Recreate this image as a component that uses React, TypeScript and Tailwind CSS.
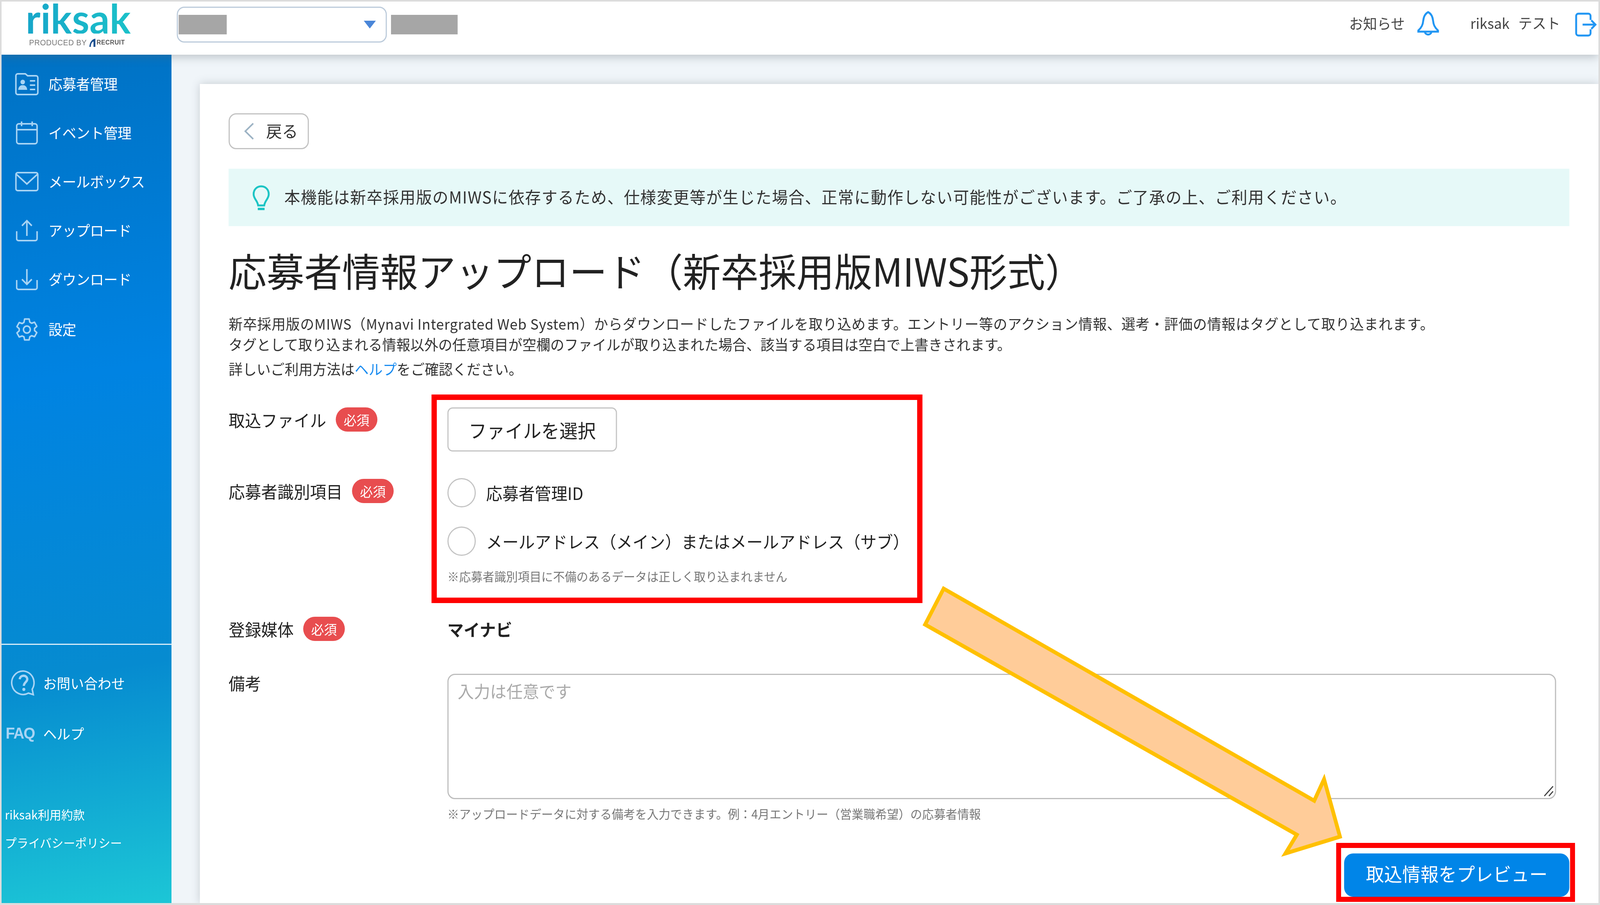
import React from "react";

const Stroke = "#a8d4f4";

function CardIcon() {
  return (
    <svg width="64" height="60" viewBox="0 0 64 60" fill="none" stroke={Stroke} strokeWidth="4">
      <path d="M3 9a5 5 0 0 1 5-5h20l6 5h22a5 5 0 0 1 5 5v38a5 5 0 0 1-5 5H8a5 5 0 0 1-5-5z" />
      <circle cx="21" cy="25" r="6" fill={Stroke} stroke="none" />
      <path d="M9 45c1-9 6-12 12-12s11 3 12 12z" fill={Stroke} stroke="none" />
      <path d="M40 22h14M40 33h14M40 44h14" strokeWidth="4" />
    </svg>
  );
}
function CalIcon() {
  return (
    <svg width="58" height="60" viewBox="0 0 58 60" fill="none" stroke={Stroke} strokeWidth="4">
      <rect x="2" y="7" width="54" height="51" rx="6" />
      <path d="M2 22h54M15 1v12M43 1v12" />
    </svg>
  );
}
function MailIcon() {
  return (
    <svg width="62" height="50" viewBox="0 0 62 50" fill="none" stroke={Stroke} strokeWidth="4">
      <rect x="2" y="2" width="58" height="46" rx="5" />
      <path d="M3 6l28 25 28-25" />
    </svg>
  );
}
function UpIcon() {
  return (
    <svg width="58" height="56" viewBox="0 0 58 56" fill="none" stroke={Stroke} strokeWidth="4">
      <path d="M2 30v19a5 5 0 0 0 5 5h44a5 5 0 0 0 5-5V30" />
      <path d="M29 42V3M16 16L29 3l13 13" />
    </svg>
  );
}
function DownIcon() {
  return (
    <svg width="58" height="56" viewBox="0 0 58 56" fill="none" stroke={Stroke} strokeWidth="4">
      <path d="M2 30v19a5 5 0 0 0 5 5h44a5 5 0 0 0 5-5V30" />
      <path d="M29 2v39M16 28l13 13 13-13" />
    </svg>
  );
}
function GearIcon() {
  return (
    <svg width="60" height="62" viewBox="0 0 24 24" fill="none" stroke={Stroke} strokeWidth="1.6" strokeLinejoin="round">
      <path d="M9.6 1.5h4.8l.7 3.2 1.9 1.1 3.1-1 2.4 4.2-2.4 2.1v2.2l2.4 2.1-2.4 4.2-3.1-1-1.9 1.1-.7 3.2H9.6l-.7-3.2L7 18.9l-3.1 1-2.4-4.2 2.4-2.1v-2.2L1.5 9.3l2.4-4.2 3.1 1 1.9-1.1z" />
      <circle cx="12" cy="12.3" r="3.6" />
    </svg>
  );
}
function HelpIcon() {
  return (
    <svg width="68" height="66" viewBox="0 0 68 66" fill="none" stroke={Stroke} strokeWidth="4">
      <path d="M34 3a30 30 0 1 0 14 56.5l13 4-3-14A30 30 0 0 0 34 3z" />
      <path d="M25 24c1-6 5-9 10-9 6 0 10 4 10 9 0 7-9 8-9 17" strokeWidth="6" />
      <circle cx="36" cy="50" r="4" fill={Stroke} stroke="none" />
    </svg>
  );
}

function NavItem({ icon, label, h }: { icon: React.ReactNode; label: string; h: string }) {
  return (
    <div className={`flex items-center ${h}`}>
      <div className="flex h-full w-[124px] items-center justify-center pl-[10px]">{icon}</div>
      <span className="text-[37px] tracking-[-0.5px] text-white">{label}</span>
    </div>
  );
}

function Badge() {
  return (
    <span className="flex h-[62px] w-[110px] shrink-0 items-center justify-center rounded-full bg-[#e84d4f] text-[34px] text-white">
      必須
    </span>
  );
}

function Label({ text }: { text: string }) {
  return (
    <div className="flex h-[62px] w-[578px] shrink-0 items-center gap-[25px]">
      <span className="text-[43px] text-[#222222]">{text}</span>
      <Badge />
    </div>
  );
}

function Radio({ text }: { text: string }) {
  return (
    <div className="flex h-[75px] items-center gap-[27px]">
      <span className="h-[75px] w-[75px] rounded-full border-[3px] border-[#c4c4c4] bg-white" />
      <span className="text-[43px] text-[#222222]">{text}</span>
    </div>
  );
}

export default function App() {
  return (
    <div className="relative flex h-[2317px] w-[4227px] origin-top-left scale-x-[0.96901] flex-col overflow-hidden border-[4px] border-b-[5px] border-[#dcdcdc] bg-[#f0f5f9] [font-family:'Noto_Sans_CJK_JP','Liberation_Sans',sans-serif]">
      <header className="relative z-10 flex h-[136px] shrink-0 items-center bg-white pb-[18px] pr-[4px] shadow-[0_6px_22px_rgba(90,100,110,0.35)]">
        <div className="flex h-[118px] w-[463px] shrink-0 flex-col items-start pl-[64px] pt-[2px]">
          <span className="bg-[linear-gradient(90deg,#17a6c9,#1bc1c9)] bg-clip-text text-[104px] font-bold leading-[80px] tracking-[0.5px] text-transparent [font-family:'Lato',sans-serif]">
            riksak
          </span>
          <span className="ml-[9px] mt-[12px] flex items-center text-[20px] leading-[20px] tracking-[0.5px] text-[#777777] [font-family:'Liberation_Sans',sans-serif]">
            <span>PRODUCED BY</span>
            <svg className="ml-[6px]" width="18" height="22" viewBox="0 0 18 22">
              <path d="M1 22C2 10 8 2 17 1v21h-5V8C7 10 5 15 5 22z" fill="#1a4f8f" />
            </svg>
            <span className="ml-[2px] text-[16px] font-bold text-[#555555]">RECRUIT</span>
          </span>
        </div>
        <div className="flex h-[92px] w-[555px] shrink-0 items-center justify-between rounded-[20px] border-[3px] border-[#bccbdb] bg-white pl-[2px] pr-[26px]">
          <span className="h-[50px] w-[127px] bg-[#a6a6a6]" />
          <svg width="32" height="20" viewBox="0 0 32 20">
            <path d="M0 0h32L16 20z" fill="#4a86d8" />
          </svg>
        </div>
        <span className="ml-[11px] h-[50px] w-[176px] bg-[#a6a6a6]" />
        <div className="ml-auto flex items-center">
          <span className="mb-[6px] text-[37px] text-[#444444]">お知らせ</span>
          <svg className="ml-[33px] mb-[4px]" width="58" height="66" viewBox="0 0 58 66" fill="none" stroke="#2196f3" strokeWidth="5">
            <path d="M29 3c8 4 12 13 13 22 1 10 4 17 13 25v3H3v-3c9-8 12-15 13-25 1-9 5-18 13-22z" />
            <path d="M20 53c2 10 16 10 18 0" />
          </svg>
          <span className="mb-[8px] ml-[82px] text-[37px] text-[#444444]">riksak</span>
          <span className="mb-[8px] ml-[23px] text-[37px] text-[#444444]">テスト</span>
          <svg className="ml-[39px]" width="58" height="62" viewBox="0 0 58 62" fill="none" stroke="#2196f3" strokeWidth="5">
            <path d="M41 19V9a6 6 0 0 0-6-6H9a6 6 0 0 0-6 6v44a6 6 0 0 0 6 6h26a6 6 0 0 0 6-6V43" />
            <path d="M20 31h34M43 20l11 11-11 11" />
          </svg>
        </div>
      </header>
      <div className="flex min-h-0 flex-1">
        <aside className="flex w-[449px] shrink-0 flex-col bg-[linear-gradient(172deg,#0072c4_0%,#0083e2_38%,#068bd0_72%,#1cc6d6_100%)]">
          <nav className="flex flex-col pt-[12px]">
            <NavItem h="h-[126px]" icon={<CardIcon />} label="応募者管理" />
            <NavItem h="h-[124px]" icon={<CalIcon />} label="イベント管理" />
            <NavItem h="h-[126px]" icon={<MailIcon />} label="メールボックス" />
            <NavItem h="h-[124px]" icon={<UpIcon />} label="アップロード" />
            <NavItem h="h-[126px]" icon={<DownIcon />} label="ダウンロード" />
            <NavItem h="h-[130px]" icon={<GearIcon />} label="設定" />
          </nav>
          <div className="mt-[740px] h-[3px] w-full bg-[#d8ecf8]" />
          <div className="mt-[32px] flex h-[130px] items-center">
            <div className="flex w-[110px] justify-center pl-[4px]"><HelpIcon /></div>
            <span className="text-[36px] text-white">お問い合わせ</span>
          </div>
          <div className="flex h-[128px] items-center">
            <div className="w-[110px] pl-[11px] text-[40px] font-bold leading-none tracking-[-2px] text-[#a8d4f4] [font-family:'Liberation_Sans',sans-serif]">FAQ</div>
            <span className="text-[36px] text-white">ヘルプ</span>
          </div>
          <div className="mt-[123px] flex flex-col gap-[30px] pl-[9px] text-[31px] leading-[42px] text-white">
            <span>riksak利用約款</span>
            <span>プライバシーポリシー</span>
          </div>
        </aside>
        <div className="min-w-0 flex-1 pl-[75px] pt-[75px]">
          <main className="h-full bg-white pl-[76px] pr-[77px] pt-[75px] shadow-[0_0_22px_rgba(90,100,110,0.3)]">
            <button className="flex h-[92px] w-[212px] items-center rounded-[20px] border-[3px] border-[#c2c2c2] bg-white pl-[36px]">
              <svg width="30" height="44" viewBox="0 0 30 44" fill="none" stroke="#9db3c4" strokeWidth="4">
                <path d="M26 2L5 22l21 20" />
              </svg>
              <span className="mb-[4px] ml-[30px] text-[42px] leading-none text-[#333333]">戻る</span>
            </button>
            <div className="mt-[50px] flex h-[147px] items-center bg-[#e6f9f8] pl-[63px]">
              <svg width="46" height="64" viewBox="0 0 46 64" fill="none" stroke="#1cc4c4" strokeWidth="5">
                <path d="M23 3C11 3 3 12 3 23c0 12 10 16 12 29h16c2-13 12-17 12-29C43 12 35 3 23 3z" />
                <path d="M14 61h18" strokeWidth="6" />
              </svg>
              <span className="mb-[6px] ml-[38px] text-[42px] tracking-[1.5px] text-[#333333]">
                本機能は新卒採用版のMIWSに依存するため、仕様変更等が生じた場合、正常に動作しない可能性がございます。ご了承の上、ご利用ください。
              </span>
            </div>
            <h1 className="mt-[52px] text-[100px] font-normal leading-[120px] text-[#222222]">
              応募者情報アップロード（新卒採用版MIWS形式）
            </h1>
            <div className="mt-[51px] text-[37px] text-[#333333]">
              <p className="leading-[53px] tracking-[0.8px]">新卒採用版のMIWS（Mynavi Intergrated Web System）からダウンロードしたファイルを取り込めます。エントリー等のアクション情報、選考・評価の情報はタグとして取り込まれます。</p>
              <p className="leading-[53px]">タグとして取り込まれる情報以外の任意項目が空欄のファイルが取り込まれた場合、該当する項目は空白で上書きされます。</p>
              <p className="mt-[10px] leading-[53px]">詳しいご利用方法は<span className="text-[#1a8cf0]">ヘルプ</span>をご確認ください。</p>
            </div>
            <div className="mt-[72px] flex items-start">
              <div className="pt-[0px]"><Label text="取込ファイル" /></div>
              <button className="h-[113px] w-[448px] rounded-[14px] border-[3px] border-[#c4c4c4] bg-white text-[48px] text-[#222222]">
                ファイルを選択
              </button>
            </div>
            <div className="mt-[68px] flex items-start">
              <div className="pt-[2px]"><Label text="応募者識別項目" /></div>
              <div className="flex flex-col">
                <Radio text="応募者管理ID" />
                <div className="mt-[49px]"><Radio text="メールアドレス（メイン）またはメールアドレス（サブ）" /></div>
                <p className="mt-[28px] text-[31px] leading-[48px] text-[#777777]">※応募者識別項目に不備のあるデータは正しく取り込まれません</p>
              </div>
            </div>
            <div className="mt-[79px] flex items-center">
              <Label text="登録媒体" />
              <span className="text-[43px] font-bold text-[#222222]">マイナビ</span>
            </div>
            <div className="mt-[82px] flex items-start">
              <div className="-mt-[8px] w-[578px] shrink-0 text-[43px] leading-[62px] text-[#222222]">備考</div>
              <div className="min-w-0 flex-1 pr-[35px]">
                <div className="relative h-[321px] rounded-[20px] border-[3px] border-[#bdbdbd] bg-white pl-[24px] pt-[10px] text-[43px] leading-[60px] text-[#aaaaaa]">
                  入力は任意です
                  <svg className="absolute bottom-[4px] right-[4px]" width="30" height="30" viewBox="0 0 30 30" stroke="#444444" strokeWidth="3">
                    <path d="M6 29L29 4M18 29L29 17" />
                  </svg>
                </div>
                <p className="mt-[14px] text-[31px] leading-[46px] text-[#777777]">※アップロードデータに対する備考を入力できます。例：4月エントリー（営業職希望）の応募者情報</p>
              </div>
            </div>
            <div className="mt-[79px] flex justify-end">
              <button className="h-[111px] w-[595px] rounded-[24px] bg-[#0085e8] pb-[10px] text-[48px] text-white">取込情報をプレビュー</button>
            </div>
          </main>
        </div>
      </div>

      <div className="absolute left-[1136px] top-[1006px] h-[534px] w-[1297px] border-[14px] border-[#ff0000]" />
      <div className="absolute left-[3526px] top-[2154px] h-[151px] w-[631px] border-[13px] border-[#ff0000]" />
      <svg className="absolute left-0 top-0" width="4219" height="2308" viewBox="4 4 4219 2308" fill="none">
        <polygon points="2493,1507 2444,1599 3426,2137 3396,2185 3540,2142 3498,1995 3472,2050" fill="#ffcc99" stroke="#ffc000" strokeWidth="10" strokeLinejoin="miter" />
      </svg>
    </div>
  );
}
